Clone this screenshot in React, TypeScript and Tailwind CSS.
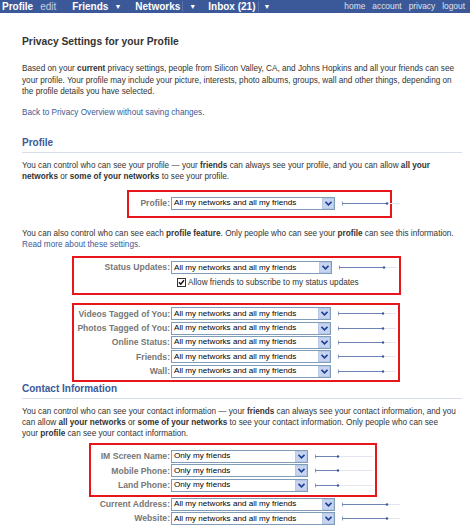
import React from 'react'

const FONT = { fontFamily: '"Liberation Sans", Arial, sans-serif' }

function Chevron() {
  return (
    <svg width="7" height="5" viewBox="0 0 7 5">
      <path d="M0.5 0.8 L3.5 3.8 L6.5 0.8" fill="none" stroke="#1c3f94" strokeWidth="1.6" />
    </svg>
  )
}

function Select({ value }: { value: string }) {
  return (
    <div className="flex h-[13px] w-[164px] items-center border border-[#7f9db9] bg-white">
      <span className="flex-1 truncate pl-[2px] text-[8.1px] leading-none text-black">{value}</span>
      <span className="flex h-[11px] w-[12px] items-center justify-center border border-[#b8c8e8] bg-[#c6d4f0]">
        <Chevron />
      </span>
    </div>
  )
}

function Slider({ level }: { level: 'all' | 'friends' }) {
  const end = level === 'all' ? 45 : 23
  return (
    <svg width="60" height="9" viewBox="0 0 60 9" className="ml-[7px] shrink-0">
      <line x1="0.5" y1="2.5" x2="0.5" y2="6.5" stroke="#8da0c8" strokeWidth="1" />
      <line x1="0" y1="4.5" x2={end} y2="4.5" stroke="#6d84b4" strokeWidth="1" />
      <line x1={end} y1="4.5" x2="58" y2="4.5" stroke="#e2e6ee" strokeWidth="1" />
      <circle cx={end} cy="4.5" r="1.2" fill="#3b5998" />
    </svg>
  )
}

function Row({ label, value, labelW, level }: { label: string; value: string; labelW: number; level: 'all' | 'friends' }) {
  return (
    <div className="flex h-[14.3px] items-center">
      <span
        className="shrink-0 whitespace-nowrap pr-[1px] text-right text-[8.6px] font-bold leading-none text-[#777]"
        style={{ width: labelW }}
      >
        {label}
      </span>
      <Select value={value} />
      <Slider level={level} />
    </div>
  )
}

function Heading({ children }: { children: React.ReactNode }) {
  return (
    <div className="mr-[8px] border-b border-[#d8dfea] pb-[3px] text-[10px] font-bold leading-[12px] text-[#3b5998]">
      {children}
    </div>
  )
}

function Para({ lines, className = '' }: { lines: React.ReactNode[]; className?: string }) {
  return (
    <div className={`text-[8.2px] text-[#333] ${className}`}>
      {lines.map((l, i) => (
        <div key={i} className="whitespace-nowrap">
          {l}
        </div>
      ))}
    </div>
  )
}

const ALL = 'All my networks and all my friends'
const ONLY = 'Only my friends'

export default function App() {
  return (
    <div className="h-[532px] w-[470px] overflow-hidden bg-white text-[#333]" style={FONT}>
      {/* top nav */}
      <div className="flex h-[13px] items-center bg-[#3b5998] text-[10px] leading-none">
        <span className="ml-[2px] font-bold text-white">Profile</span>
        <span className="ml-[7px] text-[#c3cde4]">edit</span>
        <span className="ml-[16px] font-bold text-white">Friends</span>
        <span className="ml-[6px] text-[7px] text-white">▼</span>
        <span className="ml-[14px] font-bold text-white">Networks</span>
        <span className="ml-[2px] h-[11px] border-l border-[#5b74a8]" />
        <span className="ml-[6px] text-[7px] text-white">▼</span>
        <span className="ml-[12px] font-bold text-white">Inbox (21)</span>
        <span className="ml-[2px] h-[11px] border-l border-[#5b74a8]" />
        <span className="ml-[5px] text-[7px] text-white">▼</span>
        <div className="ml-auto mr-[5px] flex gap-[7px] text-[8.4px] text-[#dfe4ee]">
          <span>home</span>
          <span>account</span>
          <span>privacy</span>
          <span>logout</span>
        </div>
      </div>

      <div className="pl-[22px]">
        <div className="mt-[23px] text-[10.3px] font-bold leading-[12px] text-[#333]">Privacy Settings for your Profile</div>

        <Para
          className="mt-[15px] leading-[11.5px]"
          lines={[
            <>Based on your <b>current</b> privacy settings, people from Silicon Valley, CA, and Johns Hopkins and all your friends can see</>,
            <>your profile. Your profile may include your picture, interests, photo albums, groups, wall and other things, depending on</>,
            <>the profile details you have selected.</>,
          ]}
        />

        <Para
          className="mt-[9px] leading-[11px]"
          lines={[
            <>
              <span className="text-[#3b5998]">Back to Privacy Overview without saving changes</span>.
            </>,
          ]}
        />

        <div className="mt-[19px]">
          <Heading>Profile</Heading>
        </div>

        <Para
          className="mt-[7px] leading-[11.5px]"
          lines={[
            <>You can control who can see your profile — your <b>friends</b> can always see your profile, and you can allow <b>all your</b></>,
            <><b>networks</b> or <b>some of your networks</b> to see your profile.</>,
          ]}
        />

        <div className="ml-[105px] mt-[7px] flex h-[28px] w-[265px] items-center border-2 border-[#e8151b]">
          <Row label="Profile:" value={ALL} labelW={42} level="all" />
        </div>

        <Para
          className="mt-[10px] leading-[11px]"
          lines={[
            <>You can also control who can see each <b>profile feature</b>. Only people who can see your <b>profile</b> can see this information.</>,
            <span className="text-[#3b5998]">Read more about these settings.</span>,
          ]}
        />

        <div className="ml-[50px] mt-[6px] w-[329px] border-2 border-[#e8151b] pb-[2px] pt-[3px]">
          <Row label="Status Updates:" value={ALL} labelW={97} level="all" />
          <div className="ml-[103px] flex h-[16px] items-center gap-[2px] text-[8.2px] leading-none">
            <svg width="9" height="9" viewBox="0 0 9 9">
              <rect x="0.5" y="0.5" width="8" height="8" fill="white" stroke="#333" />
              <path d="M2 4.2 L3.8 6.2 L7 2.2" fill="none" stroke="#111" strokeWidth="1.4" />
            </svg>
            <span>Allow friends to subscribe to my status updates</span>
          </div>
        </div>

        <div className="ml-[50px] mt-[8px] w-[328px] border-2 border-[#e8151b] py-[2px]">
          <Row label="Videos Tagged of You:" value={ALL} labelW={97} level="all" />
          <Row label="Photos Tagged of You:" value={ALL} labelW={97} level="all" />
          <Row label="Online Status:" value={ALL} labelW={97} level="all" />
          <Row label="Friends:" value={ALL} labelW={97} level="all" />
          <Row label="Wall:" value={ALL} labelW={97} level="all" />
        </div>

        <div className="mt-[1px]">
          <Heading>Contact Information</Heading>
        </div>

        <Para
          className="mt-[8px] leading-[10.7px]"
          lines={[
            <>You can control who can see your contact information — your <b>friends</b> can always see your contact information, and you</>,
            <>can allow <b>all your networks</b> or <b>some of your networks</b> to see your contact information. Only people who can see</>,
            <>your <b>profile</b> can see your contact information.</>,
          ]}
        />

        <div className="ml-[67px] mt-[4px] w-[288px] border-2 border-[#e8151b] pb-[3px] pt-[4px]">
          <Row label="IM Screen Name:" value={ONLY} labelW={80} level="friends" />
          <Row label="Mobile Phone:" value={ONLY} labelW={80} level="friends" />
          <Row label="Land Phone:" value={ONLY} labelW={80} level="friends" />
        </div>
        <div className="ml-[69px]">
          <Row label="Current Address:" value={ALL} labelW={80} level="all" />
          <Row label="Website:" value={ALL} labelW={80} level="all" />
        </div>
      </div>
    </div>
  )
}
